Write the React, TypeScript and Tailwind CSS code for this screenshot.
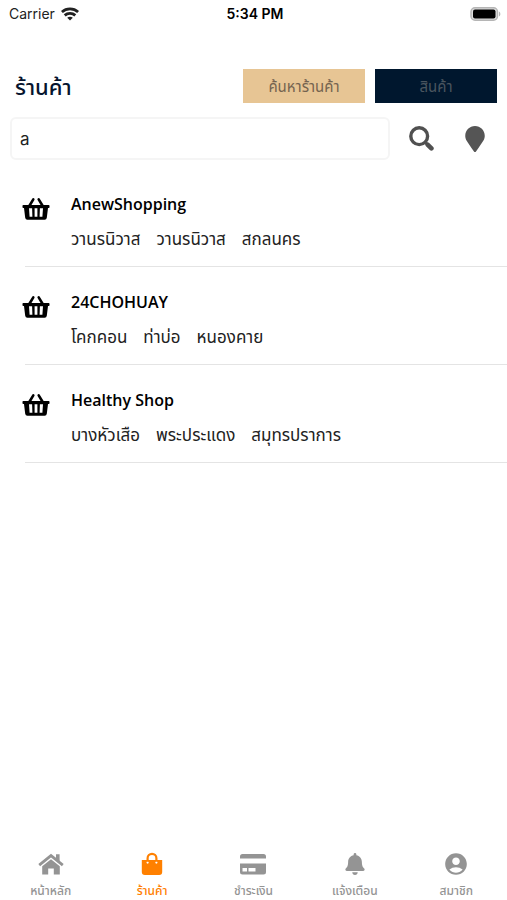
import { FaBell, FaMapMarker } from "react-icons/fa";
import { MdAccountCircle } from "react-icons/md";

interface Shop {
  name: string;
  address: string[];
}

const shops: Shop[] = [
  { name: "AnewShopping", address: ["วานรนิวาส", "วานรนิวาส", "สกลนคร"] },
  { name: "24CHOHUAY", address: ["โคกคอน", "ท่าบ่อ", "หนองคาย"] },
  { name: "Healthy Shop", address: ["บางหัวเสือ", "พระประแดง", "สมุทรปราการ"] },
];

function WifiIcon() {
  return (
    <svg className="h-3.5 w-[18px]" viewBox="0 0 18 14" fill="none" stroke="currentColor" strokeWidth="2.8">
      <path d="M.9 5C5.4 .9 12.6 .9 17.1 5" />
      <path d="M3.7 8.4C6.7 5.7 11.3 5.7 14.3 8.4" />
      <path d="M9 13.5L6.2 10.7C7.8 9.3 10.2 9.3 11.8 10.7Z" fill="currentColor" stroke="none" />
    </svg>
  );
}

function BatteryIcon() {
  return (
    <svg className="h-3.5 w-[31px]" viewBox="0 0 31 14">
      <rect x="1" y="0.75" width="26.5" height="12.5" rx="4" fill="#ddd" stroke="#b5b5b5" strokeWidth="1.5" />
      <rect x="3" y="2.5" width="22.5" height="9" rx="2" fill="#000" />
      <path d="M29 4.5C30.8 5.3 30.8 8.7 29 9.5Z" fill="#b5b5b5" />
    </svg>
  );
}

function SearchIcon() {
  return (
    <svg className="size-[25px]" viewBox="0 0 25 25" fill="none" stroke="currentColor">
      <circle cx="10.2" cy="10.2" r="8.4" strokeWidth="3.4" />
      <path d="M16 16l3 3" strokeWidth="2.6" />
      <path d="M18.6 18.6l3.8 3.8" strokeWidth="4.6" strokeLinecap="round" />
    </svg>
  );
}

function BasketIcon() {
  return (
    <svg className="h-6 w-7 shrink-0" viewBox="0 0 28 24">
      <path d="M7 9.5L11.3 2.3M21 9.5L16.7 2.3" stroke="currentColor" strokeWidth="2.6" strokeLinecap="round" />
      <path
        fillRule="evenodd"
        fill="currentColor"
        d="M1.3 8h25.4a.8.8 0 0 1 .8.8v1.4a.8.8 0 0 1-.8.8H26l-1.2 9.800a2.200 2.200 0 0 1-2.200 1.900H5.400a2.200 2.200 0 0 1-2.200-1.900L2 11h-.7a.8.8 0 0 1-.8-.8V8.800a.8.8 0 0 1 .8-.8ZM7 11.300l.6 8.500h2.800l-.3-8.500Zm5.600 0v8.500h2.800v-8.500Zm5.300 0-.3 8.500h2.800l.6-8.500Z"
      />
    </svg>
  );
}

function HomeIcon() {
  return (
    <svg className="h-6 w-[26px]" viewBox="0 0 26 24" fill="currentColor">
      <path d="M1.2 13.2L13 3.6L24.8 13.2" fill="none" stroke="currentColor" strokeWidth="2.8" />
      <path d="M18 2.3h3.6v7.400L18 6.700Z" />
      <path d="M13 7.200L21.800 14.300V22.500H15.800V16.500H10.200V22.500H4.200V14.300Z" />
    </svg>
  );
}

function BagIcon() {
  return (
    <svg className="h-6 w-6" viewBox="0 0 24 24">
      <path d="M7.6 9.5V6.2a4.4 4.4 0 0 1 8.8 0V9.5" fill="none" stroke="currentColor" strokeWidth="2.2" />
      <path
        fillRule="evenodd"
        fill="currentColor"
        d="M1.8 8h20.4v12a3 3 0 0 1-3 3H4.8a3 3 0 0 1-3-3ZM7.6 9.5a1.1 1.1 0 1 0 0 2.2 1.1 1.1 0 0 0 0-2.2Zm8.8 0a1.1 1.1 0 1 0 0 2.2 1.1 1.1 0 0 0 0-2.2Z"
      />
    </svg>
  );
}

function CardIcon() {
  return (
    <svg className="h-6 w-7" viewBox="0 0 28 24" fill="currentColor">
      <path d="M1 6.5V4.5A2.5 2.5 0 0 1 3.5 2h21A2.5 2.5 0 0 1 27 4.5V6.5Z" />
      <path
        fillRule="evenodd"
        d="M1 11.5h26V20a2.5 2.5 0 0 1-2.5 2.5h-21A2.5 2.5 0 0 1 1 20ZM3.5 16v3.5H8V16ZM9.5 16v3.5h7V16Z"
      />
    </svg>
  );
}

const tabs = [
  { label: "หน้าหลัก", icon: <HomeIcon /> },
  { label: "ร้านค้า", icon: <BagIcon />, active: true },
  { label: "ชำระเงิน", icon: <CardIcon /> },
  { label: "แจ้งเตือน", icon: <FaBell className="size-[22px]" /> },
  { label: "สมาชิก", icon: <MdAccountCircle className="size-[26px]" /> },
];

function ShopRow({ name, address }: Shop) {
  return (
    <li className="flex">
      <div className="w-[25px] shrink-0 pt-7 pl-[22px]">
        <BasketIcon />
      </div>
      <div className="h-[98px] flex-1 border-b border-[#e4e4e4] pt-[23px] pl-[46px]">
        <h2 className="text-base leading-6 font-semibold">{name}</h2>
        <p className="mt-[11px] flex gap-4 text-[17px] leading-6 text-[#222]">
          {address.map((part, i) => (
            <span key={i}>{part}</span>
          ))}
        </p>
      </div>
    </li>
  );
}

function App() {
  return (
    <div className="flex min-h-screen flex-col bg-white font-['Open_Sans','Noto_Sans_Thai','Noto_Sans',sans-serif] text-black">
      {/* status bar */}
      <div className="grid h-7 grid-cols-3 items-center pr-1.5 pl-[9px] font-[Inter,sans-serif] text-sm">
        <div className="flex items-center gap-1.5 text-[#222]">
          Carrier
          <WifiIcon />
        </div>
        <p className="text-center font-semibold">5:34 PM</p>
        <div className="flex justify-end">
          <BatteryIcon />
        </div>
      </div>

      {/* header */}
      <header className="mt-[41px] flex items-center pr-2.5 pl-[15px]">
        <h1 className="flex-1 text-[22px] leading-8 font-medium text-[#06142e]">ร้านค้า</h1>
        <div className="flex gap-2.5 text-[15px]">
          <button className="h-[34px] w-[122px] bg-[#e7c594] text-[#74634f]">ค้นหาร้านค้า</button>
          <button className="h-[34px] w-[122px] bg-[#00172e] text-[#4a555f]">สินค้า</button>
        </div>
      </header>

      {/* search */}
      <form className="mt-3.5 flex items-center pr-[19px] pl-2.5">
        <input
          aria-label="ค้นหาร้านค้า"
          defaultValue="a"
          className="h-[43px] min-w-0 flex-1 rounded-md border-2 border-[#f5f5f5] px-2 font-[Inter,sans-serif] text-[17px] text-[#222] outline-none"
        />
        <button type="button" aria-label="ค้นหา" className="ml-[19px] text-[#505050]">
          <SearchIcon />
        </button>
        <button type="button" aria-label="ตำแหน่ง" className="ml-7 text-[#555]">
          <FaMapMarker className="size-[26px]" />
        </button>
      </form>

      <ul className="mt-[9px]">
        {shops.map((shop) => (
          <ShopRow key={shop.name} {...shop} />
        ))}
      </ul>

      {/* bottom tabs */}
      <nav className="mt-auto grid grid-cols-5 text-xs font-medium">
        {tabs.map(({ label, icon, active }) => (
          <a
            key={label}
            href="#"
            className={`flex flex-col items-center ${active ? "text-[#ff8000]" : "text-[#949494]"}`}
          >
            <span className="flex h-7 items-center">{icon}</span>
            <span className="mt-1 leading-[18px]">{label}</span>
          </a>
        ))}
      </nav>
    </div>
  );
}

export default App;
